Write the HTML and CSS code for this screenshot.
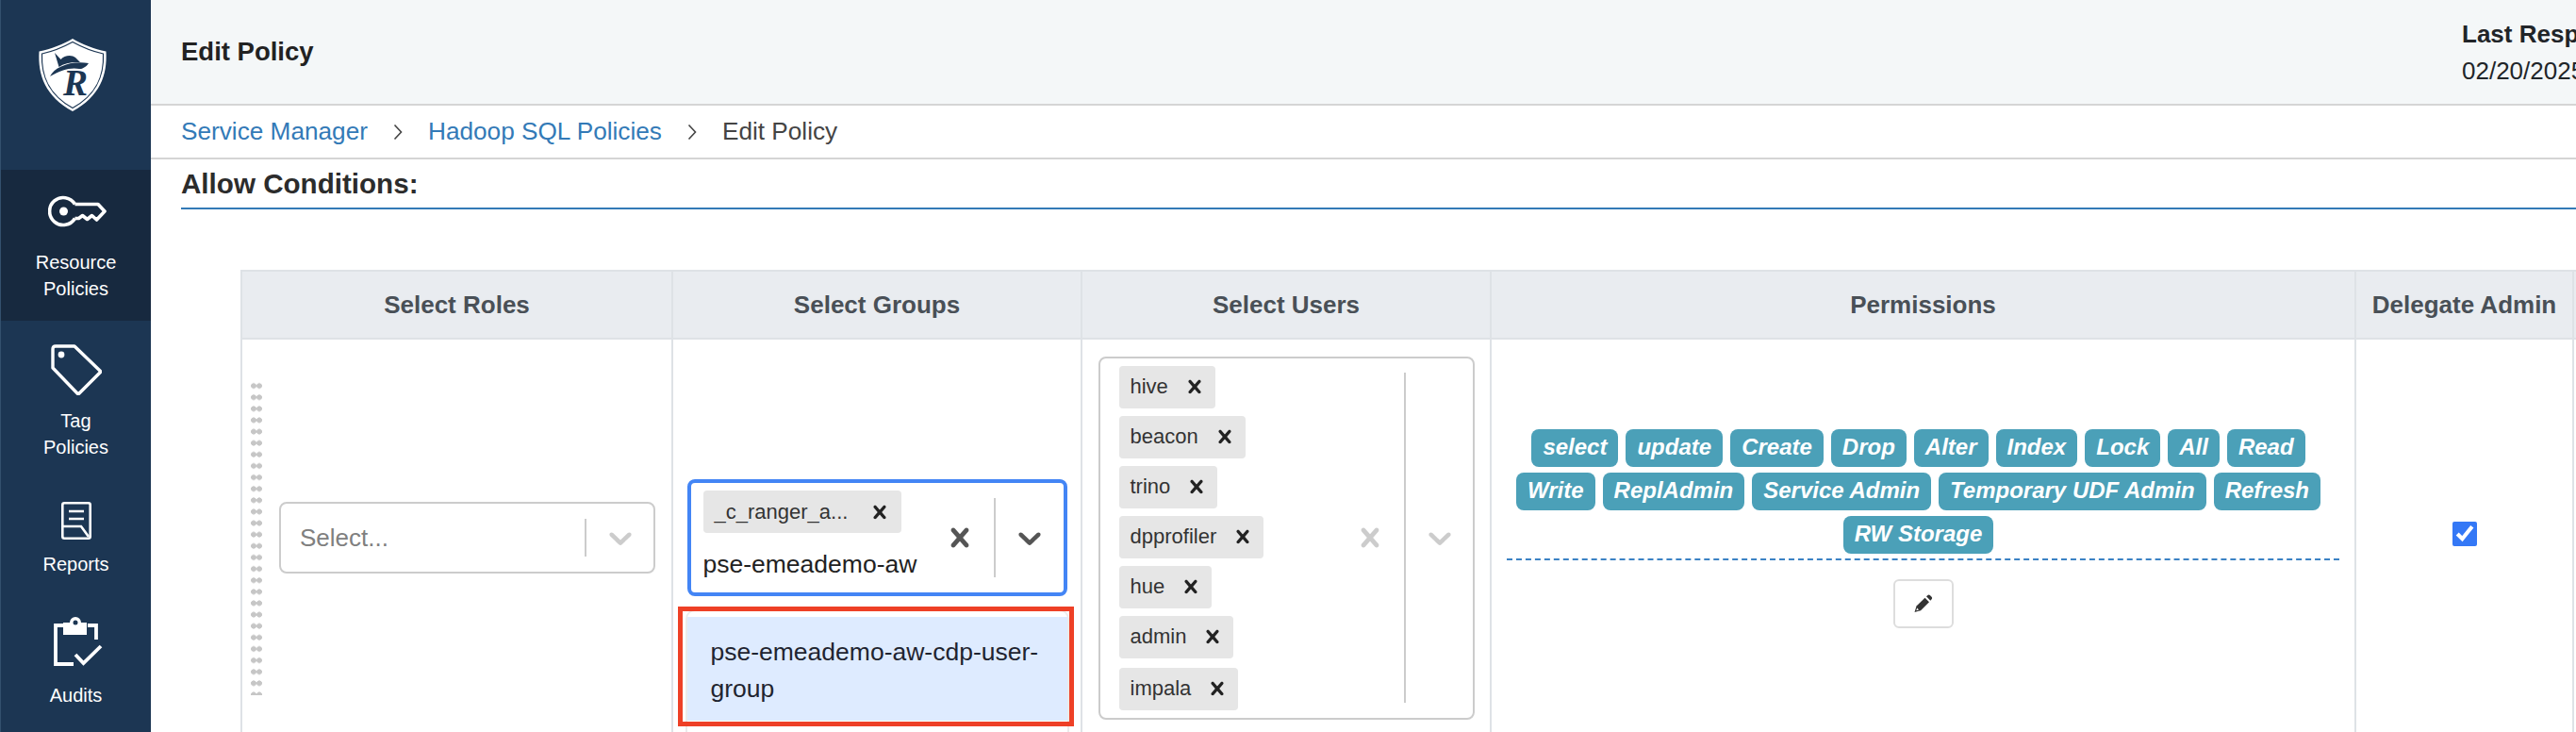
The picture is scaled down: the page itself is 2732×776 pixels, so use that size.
FILE: index.html
```html
<!DOCTYPE html>
<html lang="en">
<head>
<meta charset="utf-8">
<title>Edit Policy</title>
<link rel="stylesheet" href="styles.css">
</head>
<body>
<svg class="defs" aria-hidden="true">
  <defs>
    <symbol id="cross" viewBox="0 0 20 20"><path fill="currentColor" d="M14.348 14.849c-0.469 0.469-1.229 0.469-1.697 0l-2.651-3.030-2.651 3.029c-0.469 0.469-1.229 0.469-1.697 0-0.469-0.469-0.469-1.229 0-1.697l2.758-3.15-2.759-3.152c-0.469-0.469-0.469-1.228 0-1.697s1.228-0.469 1.697 0l2.652 3.031 2.651-3.031c0.469-0.469 1.228-0.469 1.697 0s0.469 1.229 0 1.697l-2.758 3.152 2.758 3.15c0.469 0.469 0.469 1.229 0 1.698z"/></symbol>
    <symbol id="chevron" viewBox="0 0 20 20"><path fill="currentColor" d="M4.516 7.548c0.436-0.446 1.043-0.481 1.576 0l3.908 3.747 3.908-3.747c0.533-0.481 1.141-0.446 1.576 0 0.436 0.445 0.408 1.197 0 1.615-0.406 0.418-4.695 4.502-4.695 4.502-0.217 0.223-0.502 0.335-0.789 0.335s-0.572-0.112-0.789-0.335c0 0-4.287-4.084-4.695-4.502s-0.436-1.17 0-1.615z"/></symbol>
    <symbol id="crumb" viewBox="0 0 10 18"><path fill="none" stroke="currentColor" stroke-width="1.6" d="M1.5 1.5 8.5 9 1.5 16.5"/></symbol>
  </defs>
</svg>

<aside class="sidebar">
  <div class="logo">
    <svg class="logo-mark" viewBox="0 0 74 80" width="74" height="80">
      <path fill="#fff" d="M37 1C47 7 60 12 72.500 14.500C74 40 66 62 37 78C8 62 0 40 1.500 14.500C14 12 27 7 37 1Z"/>
      <path fill="none" stroke="#1c3653" stroke-width="1.200" d="M37 4.500C47 10 58 14.500 69.500 17C70.500 40 63 60 37 74.500C11 60 3.500 40 4.500 17C16 14.500 27 10 37 4.500Z"/>
      <path fill="#1c3653" d="M18 16L24.500 23C28 18.500 36 17.500 40 21L45 26C36 25.500 28 27 22.500 31Z"/>
      <path fill="#1c3653" d="M13 41C18 31 35 24 54 27C52 30 48 33.500 44 33C36 31 24 34 13 41Z"/>
      <text class="logo-r" x="40" y="61" text-anchor="middle">R</text>
    </svg>
  </div>
  <nav class="nav">
    <a class="nav-item nav-item-active" href="#">
      <svg class="nav-icon nav-icon-key" viewBox="0 0 62 34" width="62" height="34">
        <g fill="none" stroke="#fff" stroke-width="3.600" stroke-linejoin="round">
          <path d="M28.500 9.500A14.500 14.500 0 1 0 28.500 24.500"/>
          <path d="M28.500 9.500H53L60 17L51.500 26L46.500 21.500L41.500 25.500L36.500 21.500L32.500 24.500H28.500"/>
        </g>
        <circle cx="16.500" cy="17" r="4.500" fill="#fff"/>
      </svg>
      <span>Resource<br>Policies</span>
    </a>
    <a class="nav-item nav-item-tag" href="#">
      <svg class="nav-icon" viewBox="0 0 54 54" width="54" height="54">
        <path fill="none" stroke="#fff" stroke-width="3.400" stroke-linejoin="round" d="M2 5Q2 2 5 2H25L52 28Q53 29 52 30L30 52Q29 53 28 52L2 25Z"/>
        <circle cx="11" cy="11" r="3.400" fill="#fff"/>
      </svg>
      <span>Tag<br>Policies</span>
    </a>
    <a class="nav-item nav-item-reports" href="#">
      <svg class="nav-icon" viewBox="0 0 32 40" width="32" height="40">
        <rect x="1.300" y="1.300" width="29.400" height="37.400" rx="2" fill="none" stroke="#fff" stroke-width="2.600"/>
        <path fill="none" stroke="#fff" stroke-width="2.600" d="M8 10H24M8 18H24M1.500 26H21L29 37"/>
      </svg>
      <span>Reports</span>
    </a>
    <a class="nav-item nav-item-audits" href="#">
      <svg class="nav-icon" viewBox="0 0 54 54" width="54" height="54">
        <path fill="none" stroke="#fff" stroke-width="3.800" d="M12 9H4V50H23M38 9H47V24"/>
        <path fill="#fff" fill-rule="evenodd" d="M12 6H19A6 6 0 0 1 31 6H37V19H12ZM25 3.500A2.500 2.500 0 1 0 25 8.500A2.500 2.500 0 1 0 25 3.500Z"/>
        <path fill="none" stroke="#fff" stroke-width="3.800" d="M25 40L33.500 49L52 31"/>
      </svg>
      <span>Audits</span>
    </a>
  </nav>
</aside>

<main class="main">
  <header class="topbar">
    <h1 class="page-title">Edit Policy</h1>
    <div class="last-response">
      <strong>Last Resp</strong>
      <span>02/20/2025</span>
    </div>
  </header>

  <ol class="breadcrumb">
    <li><a href="#">Service Manager</a></li>
    <li class="crumb-sep"><svg width="10" height="18"><use href="#crumb"/></svg></li>
    <li><a href="#">Hadoop SQL Policies</a></li>
    <li class="crumb-sep"><svg width="10" height="18"><use href="#crumb"/></svg></li>
    <li>Edit Policy</li>
  </ol>

  <section class="conditions">
    <h2 class="section-title">Allow Conditions:</h2>

    <div class="table">
      <div class="th">Select Roles</div>
      <div class="th">Select Groups</div>
      <div class="th">Select Users</div>
      <div class="th">Permissions</div>
      <div class="th">Delegate Admin</div>
      <div class="th th-last"></div>

      <div class="td td-roles">
        <div class="grip"></div>
        <div class="select select-roles">
          <div class="placeholder">Select...</div>
          <div class="indicators">
            <i class="sep sep-short"></i>
            <svg class="ind ind-end ind-muted"><use href="#chevron"/></svg>
          </div>
        </div>
      </div>

      <div class="td td-center">
        <div class="group-wrap">
          <div class="select select-focus">
            <div class="values">
              <div class="chip chip-group"><span>_c_ranger_a...</span><svg class="chip-x"><use href="#cross"/></svg></div>
              <div class="typed">pse-emeademo-aw</div>
            </div>
            <div class="indicators">
              <svg class="ind ind-dark"><use href="#cross"/></svg>
              <i class="sep sep-group"></i>
              <svg class="ind ind-end ind-dark"><use href="#chevron"/></svg>
            </div>
          </div>
          <div class="menu">
            <div class="option">pse-emeademo-aw-cdp-user-group</div>
          </div>
          <div class="highlight"></div>
        </div>
      </div>

      <div class="td td-center">
        <div class="select select-users">
          <div class="values values-users">
            <div class="chip"><span>hive</span><svg class="chip-x"><use href="#cross"/></svg></div>
            <div class="chip"><span>beacon</span><svg class="chip-x"><use href="#cross"/></svg></div>
            <div class="chip"><span>trino</span><svg class="chip-x"><use href="#cross"/></svg></div>
            <div class="chip"><span>dpprofiler</span><svg class="chip-x"><use href="#cross"/></svg></div>
            <div class="chip"><span>hue</span><svg class="chip-x"><use href="#cross"/></svg></div>
            <div class="chip"><span>admin</span><svg class="chip-x"><use href="#cross"/></svg></div>
            <div class="chip chip-last"><span>impala</span><svg class="chip-x"><use href="#cross"/></svg></div>
          </div>
          <div class="indicators">
            <svg class="ind ind-muted"><use href="#cross"/></svg>
            <i class="sep sep-users"></i>
            <svg class="ind ind-end ind-muted"><use href="#chevron"/></svg>
          </div>
        </div>
      </div>

      <div class="td td-perms">
        <div class="labels">
          <span class="label">select</span>
          <span class="label">update</span>
          <span class="label">Create</span>
          <span class="label">Drop</span>
          <span class="label">Alter</span>
          <span class="label">Index</span>
          <span class="label">Lock</span>
          <span class="label">All</span>
          <span class="label">Read</span>
          <span class="label">Write</span>
          <span class="label">ReplAdmin</span>
          <span class="label">Service Admin</span>
          <span class="label">Temporary UDF Admin</span>
          <span class="label">Refresh</span>
          <span class="label">RW Storage</span>
        </div>
        <button class="edit-btn" type="button" aria-label="Edit">
          <svg viewBox="0 0 20 20" width="20" height="20">
            <path fill="#333" d="M0.500 19L2.500 12.500L11.500 3.800L16 8.300L7 17.200Z"/>
            <path fill="#333" d="M13 2.300L14.800 0.800Q15.800 0.200 16.800 1L18.800 3Q19.500 4 18.800 5L17.300 6.700Z"/>
            <path fill="#fff" d="M2.300 17.300L3.200 14.600L5 16.400Z"/>
          </svg>
        </button>
      </div>

      <div class="td td-center">
        <input class="check" type="checkbox" checked aria-label="Delegate Admin">
      </div>
      <div class="td td-last"></div>
    </div>
  </section>
</main>
</body>
</html>
```

FILE: styles.css
```css
* { box-sizing: border-box; }

html, body {
  margin: 0;
  height: 776px;
  overflow: hidden;
}

body {
  display: flex;
  width: 2732px;
  font-family: "Liberation Sans", Arial, sans-serif;
  font-size: 26px;
  color: #212529;
  background: #fff;
}

.defs { position: absolute; width: 0; height: 0; }

/* Sidebar */
.sidebar {
  flex: 0 0 160px;
  height: 776px;
  background: #1c3653;
  border-left: 1px solid #33506d;
}

.logo {
  height: 180px;
  padding: 40px 0 0 39px;
}

.logo-mark { display: block; }

.logo-r {
  font-family: "Liberation Serif", serif;
  font-weight: 700;
  font-style: italic;
  font-size: 39px;
  fill: #1c3653;
}

.nav { display: flex; flex-direction: column; }

.nav-item {
  display: flex;
  flex-direction: column;
  align-items: center;
  color: #fff;
  text-decoration: none;
  font-size: 20px;
  line-height: 28px;
  text-align: center;
}

.nav-icon { display: block; }

.nav-item-active {
  height: 160px;
  padding-top: 27px;
  gap: 23px;
  background: #17293f;
}

.nav-icon-key { margin-left: 3px; }

.nav-item-tag { height: 165px; padding-top: 25px; gap: 13px; }
.nav-item-reports { height: 125px; padding-top: 27px; gap: 12px; }
.nav-item-audits { height: 125px; padding-top: 24px; gap: 15px; }
.nav-item-audits .nav-icon { margin-left: 3px; }

/* Main */
.main {
  flex: 1;
  min-width: 0;
  display: flex;
  flex-direction: column;
}

.topbar {
  flex: none;
  display: flex;
  align-items: center;
  height: 112px;
  padding-left: 32px;
  background: #f4f7f8;
  border-bottom: 2px solid #d5d5d5;
}

.page-title {
  flex: 1;
  margin: 0;
  font-size: 27.500px;
  font-weight: 700;
  color: #222;
}

.last-response {
  flex: 0 0 121px;
  min-width: 0;
  display: flex;
  flex-direction: column;
  gap: 11px;
  font-size: 26px;
  line-height: 28px;
  white-space: nowrap;
  color: #212529;
}

.breadcrumb {
  flex: none;
  display: flex;
  align-items: center;
  height: 57px;
  margin: 0;
  padding: 0 0 0 32px;
  list-style: none;
  border-bottom: 2px solid #d5d5d5;
  font-size: 26.200px;
  color: #444;
}

.breadcrumb a { color: #337ab7; text-decoration: none; }

.crumb-sep {
  display: flex;
  width: 64px;
  justify-content: center;
  color: #444;
}

.conditions {
  flex: none;
  padding-left: 32px;
}

.section-title {
  height: 53px;
  margin: 0 0 64px;
  padding-top: 9px;
  font-size: 29.600px;
  line-height: 34px;
  font-weight: 700;
  color: #2c2c2c;
  border-bottom: 2px solid #337ab7;
}

/* Table */
.table {
  display: grid;
  grid-template-columns: 457px 434px 434px 917px 231px 1fr;
  grid-template-rows: 72px 420px;
  margin-left: 63px;
  border-left: 2px solid #dee2e6;
  border-top: 2px solid #dee2e6;
}

.th {
  display: flex;
  align-items: center;
  justify-content: center;
  background: #e9ecf0;
  border-right: 2px solid #dee2e6;
  border-bottom: 2px solid #dee2e6;
  font-weight: 700;
  color: #495057;
  white-space: nowrap;
}

.td {
  display: flex;
  align-items: center;
  border-right: 2px solid #dee2e6;
}

.td-center { justify-content: center; }
.th-last, .td-last { border-right: 0; }

.td-roles { padding-left: 9px; }

.grip {
  width: 12px;
  height: 334px;
  margin-right: 18px;
  background-image: radial-gradient(circle, #c6c6c6 2.600px, transparent 3.200px);
  background-size: 6px 12.130px;
}

/* Select controls */
.select {
  display: flex;
  background: #fff;
  border: 2px solid #ccc;
  border-radius: 8px;
}

.select-roles { width: 399px; height: 76px; align-items: center; }
.select-users { width: 399px; height: 385px; }

.select-focus {
  width: 403px;
  height: 124px;
  border: 4px solid #4385f5;
}

.placeholder {
  flex: 1;
  padding-left: 20px;
  color: #808080;
}

.values {
  flex: 1;
  min-width: 0;
  display: flex;
  flex-direction: column;
  align-items: flex-start;
  padding: 8px 0 0 13px;
}

.values-users {
  gap: 8px;
  padding-left: 20px;
}

.typed {
  margin-top: 13px;
  font-size: 26.500px;
  line-height: 40px;
  white-space: nowrap;
  color: #222;
}

.chip {
  display: flex;
  align-items: center;
  height: 45px;
  padding-left: 12px;
  background: #e6e6e6;
  border-radius: 4px;
  font-size: 22px;
  color: #333;
  white-space: nowrap;
}

.chip-group {
  width: 210px;
  justify-content: space-between;
}

.chip-last { margin-top: 2px; }

.chip-x {
  flex: none;
  width: 28px;
  height: 28px;
  margin: 0 8px 0 14px;
  color: #222;
}

.chip-group .chip-x { margin: 0 9px 0 0; }

.indicators {
  display: flex;
  align-items: center;
}

.ind {
  flex: none;
  width: 40px;
  height: 40px;
}

.ind-end { margin-right: 15px; }
.select-focus .ind-end { margin-right: 16px; }
.ind-muted { color: #ccc; }
.ind-dark { color: #555; }

.sep {
  display: block;
  flex: none;
  width: 2px;
  margin: 0 16px;
  background: #ccc;
}

.sep-short { height: 40px; }
.sep-group { height: 84px; }
.sep-users { height: 350px; }

/* Dropdown menu */
.group-wrap { position: relative; }

.menu {
  position: absolute;
  left: 0;
  top: 140px;
  width: 403px;
  height: 150px;
  padding-top: 6px;
  background: #fff;
  border-radius: 8px;
  box-shadow: 0 0 0 2px rgba(0, 0, 0, .08);
}

.option {
  height: 110px;
  padding: 18px 22px 0 25px;
  background: #deebff;
  font-size: 26.500px;
  line-height: 38.500px;
  color: #1f2430;
}

.highlight {
  position: absolute;
  left: -10px;
  top: 135px;
  width: 420px;
  height: 127px;
  border: 5px solid #ee4026;
}

/* Permissions */
.td-perms {
  flex-direction: column;
  justify-content: center;
  padding-bottom: 20px;
}

.labels {
  display: flex;
  flex-wrap: wrap;
  justify-content: center;
  gap: 6px 8px;
  width: 883px;
  padding: 0 10px 5px 0;
  border-bottom: 2px dashed #3b82c4;
}

.label {
  height: 40px;
  padding: 0 12px;
  background: #4ba0b8;
  border-radius: 8px;
  font-size: 24px;
  font-weight: 700;
  font-style: italic;
  line-height: 38px;
  color: #fff;
  white-space: nowrap;
}

.edit-btn {
  display: flex;
  align-items: center;
  justify-content: center;
  width: 64px;
  height: 52px;
  margin-top: 20px;
  padding: 0;
  background: #fff;
  border: 2px solid #ddd;
  border-radius: 6px;
}

.check {
  width: 26px;
  height: 26px;
  margin: 0 0 8px;
  accent-color: #3478f6;
}
```
